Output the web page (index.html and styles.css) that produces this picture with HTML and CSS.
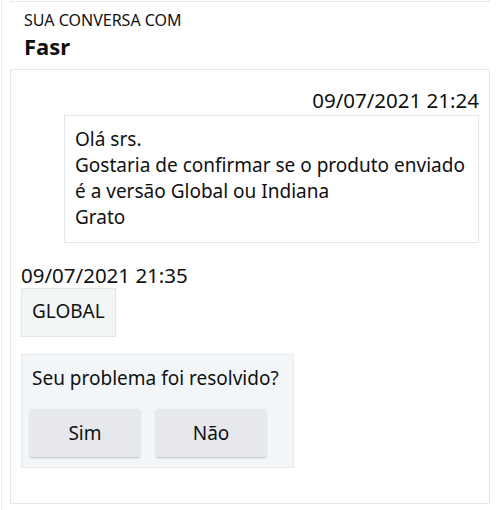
FILE: index.html
```html
<!DOCTYPE html>
<html lang="pt">
<head>
<meta charset="utf-8">
<link rel="stylesheet" href="styles.css">
</head>
<body>
<div class="page">
  <div class="prev-card"></div>
  <div class="header">
    <div class="header-label">SUA CONVERSA COM</div>
    <div class="header-name">Fasr</div>
  </div>
  <div class="card">
    <div class="stamp stamp-right">09/07/2021 21:24</div>
    <div class="msg msg-out">Olá srs.<br>Gostaria de confirmar se o produto enviado<br>é a versão Global ou Indiana<br>Grato</div>
    <div class="stamp stamp-left">09/07/2021 21:35</div>
    <div class="msg msg-in">GLOBAL</div>
    <div class="question">
      <div class="question-text">Seu problema foi resolvido?</div>
      <div class="question-actions">
        <button class="btn">Sim</button>
        <button class="btn">Não</button>
      </div>
    </div>
  </div>
</div>
</body>
</html>
```
FILE: styles.css
```css
html, body {
  margin: 0;
  padding: 0;
  background: #ffffff;
}
body {
  font-family: "Noto Sans", "Open Sans", sans-serif;
  color: #0f1111;
  width: 500px;
  height: 510px;
  overflow: hidden;
}
.page {
  margin-left: 1px;
  border-left: 1px solid #ececec;
  padding-left: 8px;
  height: 510px;
  box-sizing: border-box;
}
.prev-card {
  width: 480px;
  height: 2px;
  box-sizing: border-box;
  border: 1px solid #e7e7e7;
  border-top: none;
}
.header {
  padding: 7px 14px 0 14px;
  height: 67px;
  box-sizing: border-box;
}
.header-label {
  font-size: 16px;
  line-height: 22px;
}
.header-name {
  font-size: 22px;
  font-weight: 700;
  line-height: 30px;
}
.card {
  width: 480px;
  height: 435px;
  box-sizing: border-box;
  border: 1px solid #e7e7e7;
  padding: 18px 10px 0 10px;
  display: flex;
  flex-direction: column;
  align-items: flex-start;
}
.stamp {
  font-size: 20.5px;
  line-height: 24px;
}
.stamp-right {
  align-self: flex-end;
  margin-bottom: 3px;
}
.stamp-left {
  margin-top: 20px;
  margin-bottom: 1px;
}
.msg {
  font-size: 19px;
  border: 1px solid #e3e6e6;
  box-sizing: border-box;
}
.msg-out {
  align-self: flex-end;
  width: 415px;
  line-height: 26px;
  padding: 10px 10px 12px 10px;
  background: #ffffff;
}
.msg-in {
  line-height: 22px;
  padding: 11px 10px 14px 10px;
  background: #f3f6f6;
}
.question {
  margin-top: 17px;
  width: 273px;
  height: 114px;
  box-sizing: border-box;
  border: 1px solid #e7eaea;
  background: #f3f6f8;
  padding: 12px 0 0 8px;
}
.question-text {
  font-size: 19px;
  line-height: 22px;
  padding-left: 2px;
}
.question-actions {
  display: flex;
  gap: 16px;
  margin-top: 20px;
}
.btn {
  width: 110px;
  height: 48px;
  border: none;
  border-radius: 2px;
  background: #e6e8eb;
  box-shadow: 0 1px 2px rgba(0, 0, 0, 0.22);
  font-family: "Noto Sans", "Open Sans", sans-serif;
  font-size: 19px;
  color: #0f1111;
  padding: 0;
}
```
